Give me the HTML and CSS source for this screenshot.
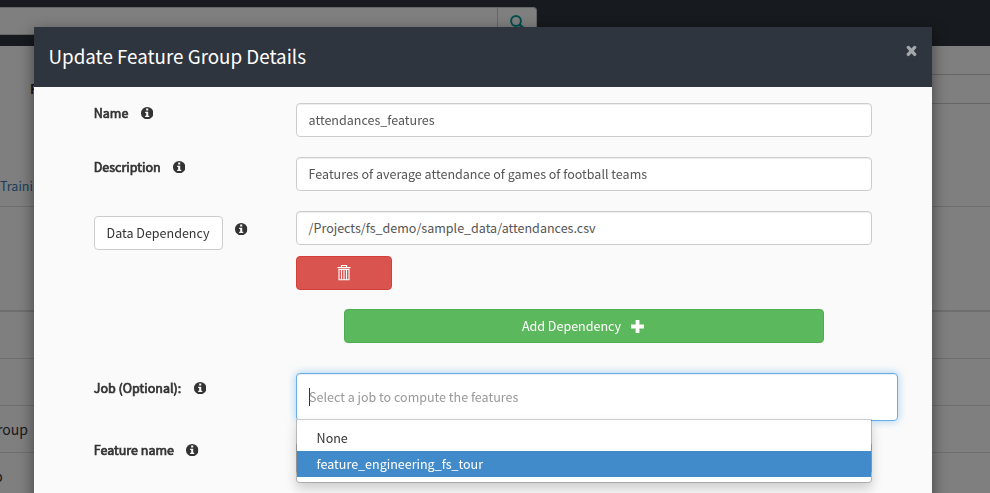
FILE: index.html
```html
<!DOCTYPE html>
<html lang="en">
<head>
<meta charset="utf-8">
<title>Update Feature Group Details</title>
<link rel="stylesheet" href="styles.css">
</head>
<body>
<svg class="defs" aria-hidden="true">
  <symbol id="info" viewBox="0 0 12 12">
    <circle cx="6" cy="6" r="6" fill="#333"/>
    <path fill="#fafafa" d="M5 1.4h2v2H5zM4 4.5h3v4h1v1.3H4V8.5h1V5.7H4z"/>
  </symbol>
</svg>
<div class="page">
  <div class="navbar">
    <div class="search">
      <div class="search-input"></div>
      <div class="search-button">
        <svg width="14" height="14" viewBox="0 0 14 14" fill="none" stroke="#009e9a"><circle cx="6" cy="6" r="4.9" stroke-width="2"/><path d="M9.4 9.4l4 4" stroke-width="2.8"/></svg>
      </div>
    </div>
  </div>
  <div class="columns">
    <div class="side">
      <div class="side-head"><b>F</b></div>
      <div class="side-link">Traini</div>
    </div>
    <div class="main">
      <div class="strip"></div>
      <div class="strip"></div>
    </div>
  </div>
  <div class="table-head"></div>
  <div class="row"></div>
  <div class="row"></div>
  <div class="row"><span class="group">roup</span></div>
  <div class="row"><span class="cut">p</span></div>
</div>
<div class="backdrop">
  <div class="modal">
    <div class="modal-header">
      <h1>Update Feature Group Details</h1>
      <svg class="close" width="11" height="12" viewBox="0 0 11 12"><path d="M2.300 2.400l6.400 7M8.700 2.400l-6.400 7" stroke="#a3a6aa" stroke-width="3.300" stroke-linecap="round"/></svg>
    </div>
    <div class="modal-body">
      <div class="field">
        <div class="label"><b>Name</b><svg class="info"><use href="#info"/></svg></div>
        <div class="input">attendances_features</div>
      </div>
      <div class="field">
        <div class="label"><b>Description</b><svg class="info"><use href="#info"/></svg></div>
        <div class="input">Features of average attendance of games of football teams</div>
      </div>
      <div class="field dependency">
        <div class="label"><div class="button">Data Dependency</div><svg class="info"><use href="#info"/></svg></div>
        <div class="dependency-list">
          <div class="input">/Projects/fs_demo/sample_data/attendances.csv</div>
          <div class="danger">
            <svg width="14" height="16" viewBox="0 0 14 16" fill="none" stroke="#fff"><path d="M4.5 2.5v-2h5v2M.5 2.7h13" stroke-width="1.2"/><path d="M2 4.5h10v10.3H2zM4.5 5v9.500M7 5v9.500M9.500 5v9.500" stroke-width="1.1"/></svg>
          </div>
          <div class="success">Add Dependency<svg width="13" height="13" viewBox="0 0 13 13"><path d="M6.500 0v13M0 6.500h13" stroke="#fff" stroke-width="3.800"/></svg></div>
        </div>
      </div>
      <div class="field job">
        <div class="label"><b>Job (Optional):</b><svg class="info"><use href="#info"/></svg></div>
        <div class="select">
          <span class="placeholder">Select a job to compute the features</span>
          <div class="menu">
            <div class="option">None</div>
            <div class="option active">feature_engineering_fs_tour</div>
          </div>
        </div>
      </div>
      <div class="field feature">
        <div class="label"><b>Feature name</b><svg class="info"><use href="#info"/></svg></div>
        <div class="input"></div>
      </div>
    </div>
  </div>
</div>
</body>
</html>
```
FILE: styles.css
```css
* { box-sizing: border-box; }
html, body { margin: 0; height: 100%; overflow: hidden; }
body { font: 12.53px/20px "Noto Sans CJK SC", "Open Sans", sans-serif; color: #333; background: #fff; }
svg { display: block; flex: none; }
.defs { display: none; }

/* Page behind the dialog */
.page { height: 493px; overflow: hidden; }
.navbar { height: 46px; padding-top: 7px; background: #2e343c; }
.search { display: flex; width: 537px; height: 28px; background: #fff; border: 1px solid #ccc; border-left: 0; border-radius: 0 4px 4px 0; }
.search-input { width: 497px; }
.search-button { flex: 1; border-left: 1px solid #ccc; padding: 7px 0 0 12px; }
.columns { display: flex; height: 161px; border-bottom: 1px solid #ddd; }
.side { width: 60px; }
.side-head { padding: 33px 0 0 30px; }
.side-link { padding-top: 77px; color: #337ab7; }
.main { flex: 1; }
.strip { height: 29px; border-bottom: 1px solid #ccc; }
.table-head { height: 105px; border-bottom: 2px solid #ddd; }
.row { height: 47px; padding-top: 13px; font-size: 14px; border-bottom: 1px solid #ddd; }
.group { margin-left: -3px; }
.cut { margin-left: -6px; }

/* Dialog */
.backdrop { position: fixed; inset: 0; padding: 27px 58px 0 34px; background: rgba(0,0,0,.5); }
.modal { height: 520px; background: #fafafa; box-shadow: 0 5px 15px rgba(0,0,0,.5); }
.modal-header { display: flex; justify-content: space-between; height: 60px; padding: 14px 15px 0 14.5px; background: #2f353e; }
h1 { margin: 0; font-size: 18.8px; font-weight: 400; line-height: 30px; color: #fff; }
.close { margin-top: 4px; }
.modal-body { padding: 16px 34px 0 60px; }
.field { display: flex; height: 54px; }
.label { display: flex; width: 202px; height: 20px; gap: 12.4px; flex: none; }
.label b { font-weight: 400; margin-left: -.3px; -webkit-text-stroke: .7px #333; }
.info { width: 12.4px; height: 12.4px; margin-top: 4px; }
.input { width: 576px; height: 34px; padding: 6px 11.6px; color: #555; background: #fff; border: 1px solid #ccc; border-radius: 4px; box-shadow: inset 0 1px 1px rgba(0,0,0,.075); }
.dependency { height: 162px; }
.dependency .info { margin-top: 12px; }
.button { width: 129px; height: 34px; margin-top: 5px; padding-right: 1px; line-height: 32px; text-align: center; background: #fff; border: 1px solid #ccc; border-radius: 4px; }
.danger, .success { display: flex; align-items: center; justify-content: center; height: 34px; border-radius: 4px; }
.danger { width: 96px; margin-top: 11px; background: #d9534f; border: 1px solid #d43f3a; }
.success { width: 480px; margin: 19px 0 0 48px; padding-right: 2px; gap: 10px; color: #fff; background: #5cb85c; border: 1px solid #4cae4c; }
.job { height: 62px; }
.job .label, .feature .label { margin-top: 5px; }
.feature .input { margin-top: 6px; }
.select { position: relative; width: 602px; height: 48px; padding: 13px 12px; background: #fff; border: 1px solid #66afe9; border-radius: 4px; box-shadow: inset 0 1px 1px rgba(0,0,0,.075), 0 0 8px rgba(102,175,233,.6); flex: none; }
.placeholder { display: block; height: 18px; margin-top: 1px; line-height: 18px; color: #999; box-shadow: -1px 0 0 #333; width: 300px; margin-left: 1px; text-indent: -1px; }
.menu { position: absolute; z-index: 2; top: 45px; left: -1px; width: 576px; height: 64px; padding: 5px 0; background: #fff; background-clip: padding-box; border: 1px solid rgba(0,0,0,.2); border-top-color: #ccc; border-radius: 0 0 4px 4px; box-shadow: 0 6px 12px rgba(0,0,0,.175); }
.option { height: 26px; padding: 3px 19.6px; }
.active { color: #fff; background: #428bca; }
```
